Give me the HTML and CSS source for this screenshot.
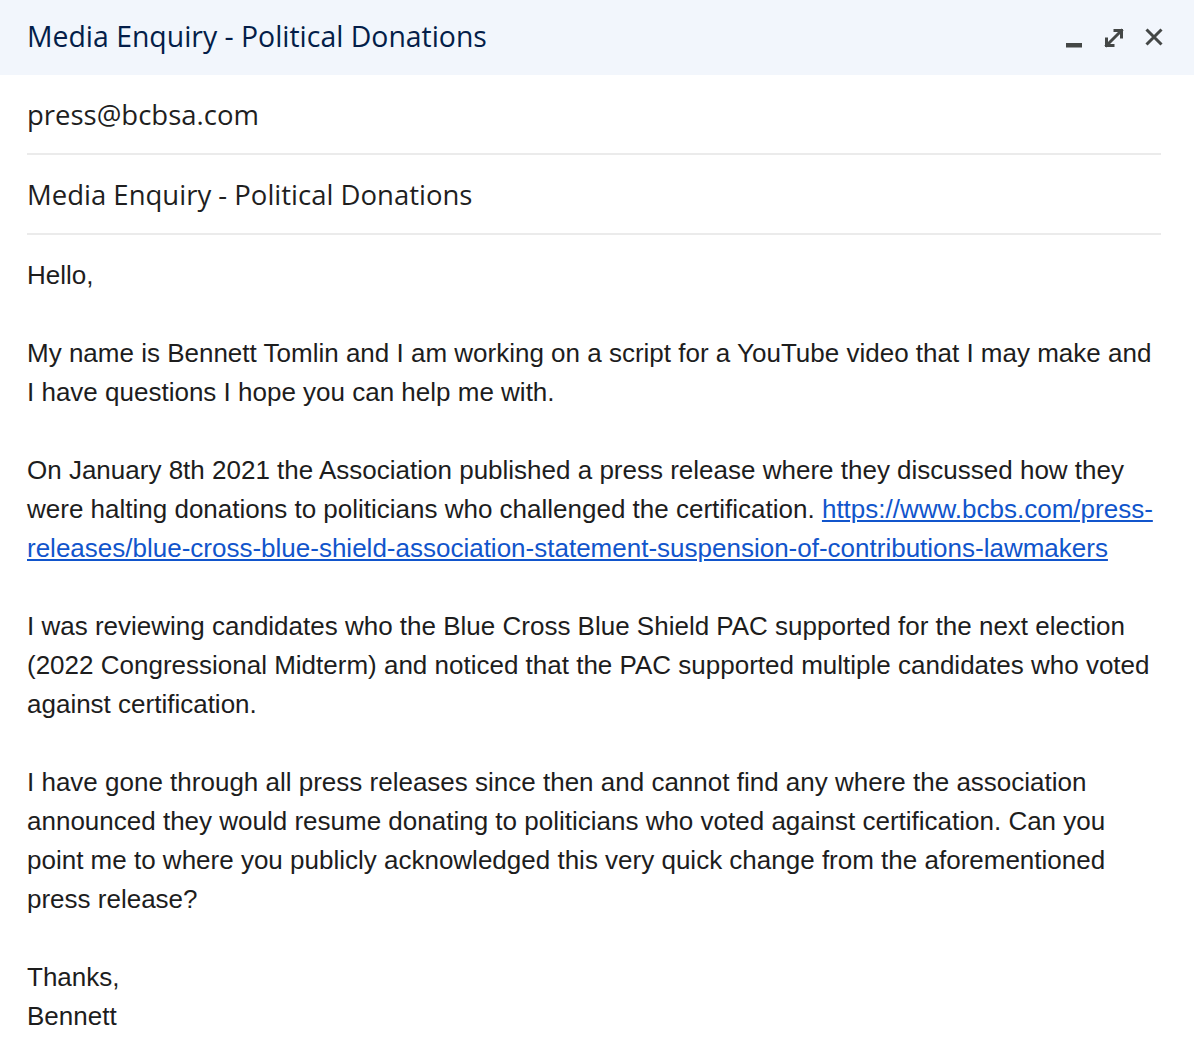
FILE: index.html
```html
<!DOCTYPE html>
<html>
<head>
<meta charset="utf-8">
<link rel="stylesheet" href="styles.css">
</head>
<body>
<div class="window">
  <header class="titlebar">
    <h1 class="title">Media Enquiry - Political Donations</h1>
    <div class="controls">
      <svg class="icon" viewBox="0 0 24 24" width="24" height="24"><rect x="4" y="17" width="16" height="4.5" fill="#444746"/></svg>
      <svg class="icon" viewBox="0 0 24 24" width="24" height="24"><path d="M13 4.5h6.5v6.5M19.5 4.5 4.5 19.5M4.5 13v6.5H11" stroke="#444746" stroke-width="3" fill="none" stroke-linecap="square"/></svg>
      <svg class="icon" viewBox="0 0 24 24" width="24" height="24"><path d="M4.5 3.5 19.5 18.5M19.5 3.5 4.5 18.5" stroke="#444746" stroke-width="3" fill="none"/></svg>
    </div>
  </header>
  <div class="fields">
    <div class="field">press@bcbsa.com</div>
    <div class="field">Media Enquiry - Political Donations</div>
  </div>
  <div class="body">
    <p>Hello,</p>
    <p>My name is Bennett Tomlin and I am working on a script for a YouTube video that I may make and I have questions I hope you can help me with.</p>
    <p>On January 8th 2021 the Association published a press release where they discussed how they were halting donations to politicians who challenged the certification. <a href="#">https://www.bcbs.com/press-releases/blue-cross-blue-shield-association-statement-suspension-of-contributions-lawmakers</a></p>
    <p>I was reviewing candidates who the Blue Cross Blue Shield PAC supported for the next election (2022 Congressional Midterm) and noticed that the PAC supported multiple candidates who voted against certification.</p>
    <p>I have gone through all press releases since then and cannot find any where the association announced they would resume donating to politicians who voted against certification. Can you point me to where you publicly acknowledged this very quick change from the aforementioned press release?</p>
    <p>Thanks,<br>Bennett</p>
  </div>
</div>
</body>
</html>
```
FILE: styles.css
```css
html, body {
  margin: 0;
  padding: 0;
  background: #ffffff;
}
.window {
  width: 1194px;
  min-height: 1054px;
}
.titlebar {
  height: 75px;
  background: #f2f6fc;
  display: flex;
  align-items: center;
  justify-content: space-between;
  padding: 0 28px 4px 27px;
  box-sizing: border-box;
}
.title {
  margin: 0;
  font-family: "Open Sans", sans-serif;
  font-weight: 400;
  font-size: 28.4px;
  color: #041e49;
}
.controls {
  display: flex;
  gap: 16px;
  align-items: center;
  padding-top: 4px;
}
.icon {
  display: block;
}
.fields {
  margin: 0 33px 0 27px;
}
.field {
  height: 80px;
  box-sizing: border-box;
  border-bottom: 2px solid #ebebeb;
  display: flex;
  align-items: center;
  font-family: "Open Sans", sans-serif;
  font-size: 27.5px;
  color: #1f1f1f;
}
.body {
  padding: 21px 33px 0 27px;
  font-family: "Liberation Sans", Arial, sans-serif;
  font-size: 26px;
  line-height: 39px;
  color: #1d1d1d;
}
.body p {
  margin: 0 0 39px 0;
}
.body a {
  color: #1155cc;
  text-decoration: underline;
}
```
